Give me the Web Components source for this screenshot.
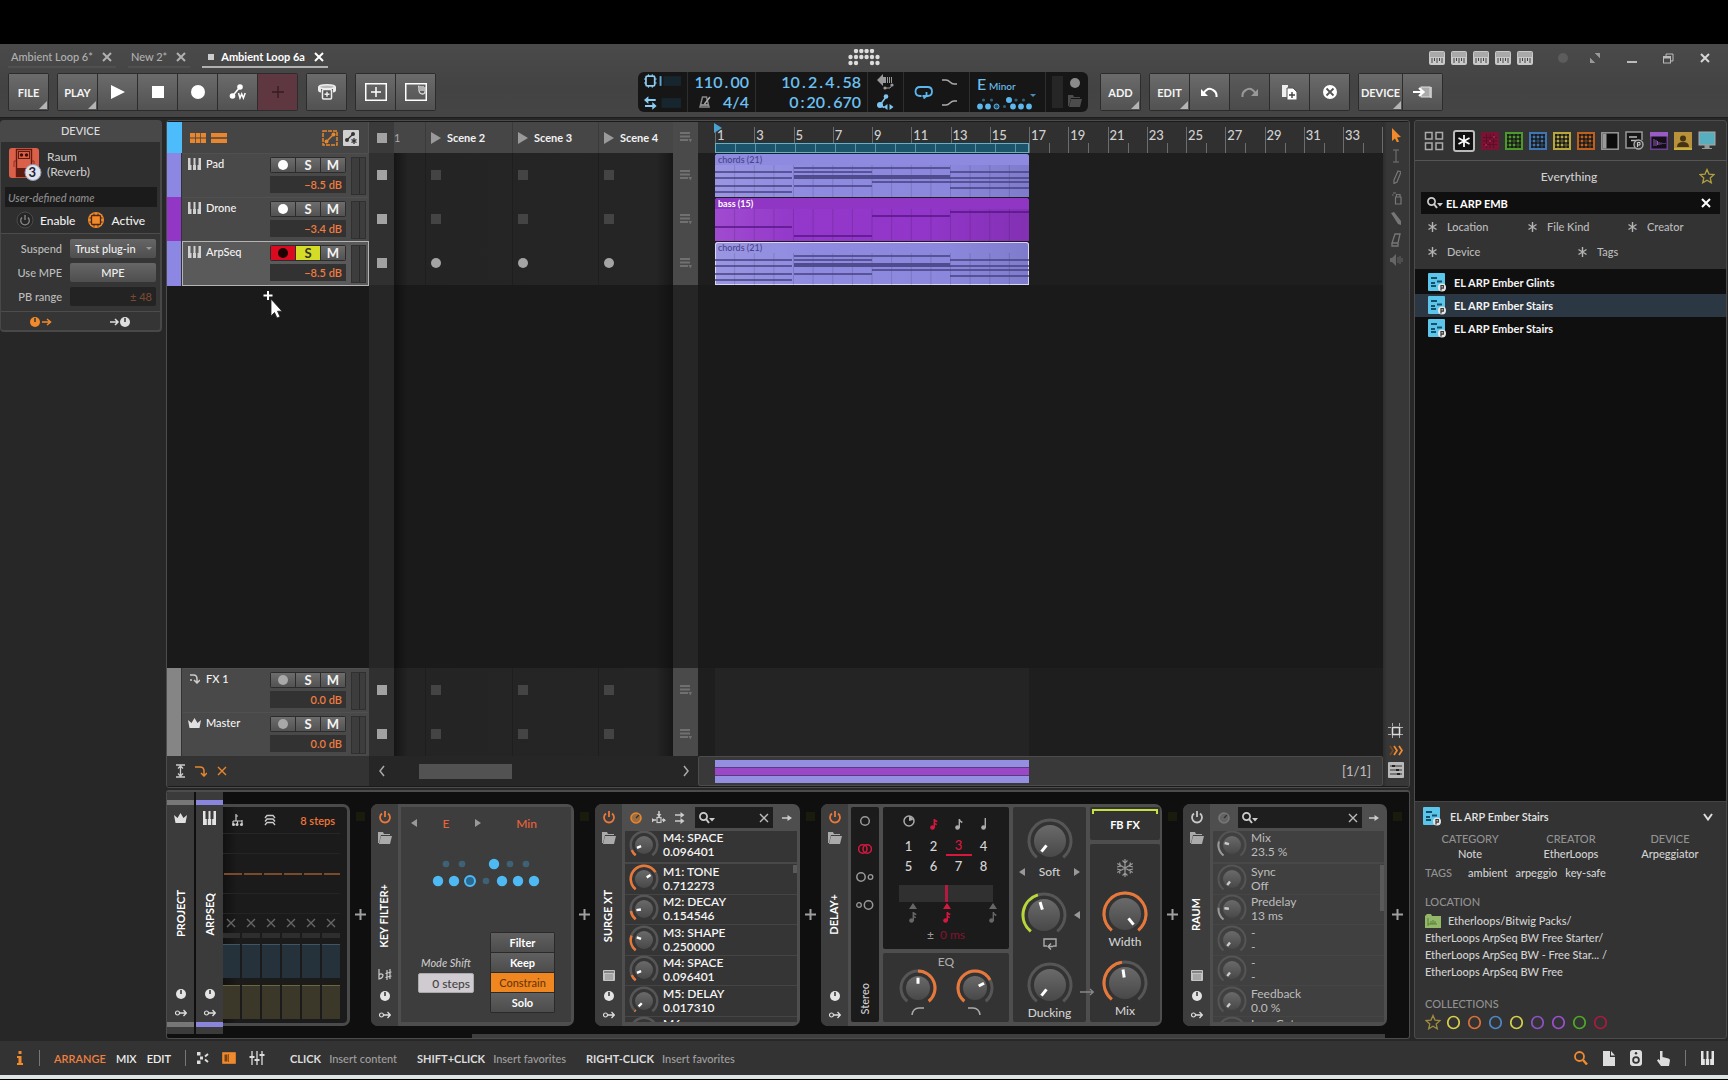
<!DOCTYPE html>
<html lang="en">
<head>
<meta charset="utf-8">
<title>Ambient Loop 6a</title>
<style>
html,body{margin:0;height:100%;background:#000}
body{font-family:Lato,"Liberation Sans",sans-serif;font-size:11px;font-weight:500;line-height:15px;color:#d6d6d6;overflow:hidden}
</style>
</head>
<body>
<daw-app></daw-app>
<script>
/* ---------- icon library: [width, height, markup] ---------- */
const grid = c => `<rect x="1" y="1" width="16" height="16" fill="#1b1b1b" stroke="${c}" stroke-width="2"/>` +
  [5,9,13].map(p=>`<path d="M${p} 2V16M2 ${p}H16" stroke="${c}" stroke-opacity=".55"/>`).join('') +
  [[5,5],[9,5],[13,5],[5,9],[13,9],[5,13],[9,13]].map(([x,y])=>`<rect x="${x-1}" y="${y-1}" width="2" height="2" fill="${c}"/>`).join('');
const ICONS = {
  close:[10,10,'<path d="M1 1L9 9M9 1L1 9" stroke="currentColor" stroke-width="2"/>'],
  closeThin:[10,10,'<path d="M1 1L9 9M9 1L1 9" stroke="currentColor" stroke-width="1.4"/>'],
  logo:[33,17,[[8,2],[13.3,2],[18.600,2],[24,2],[2.500,8],[8,8],[13.300,8],[18.600,8],[24,8],[29.500,8],[2.500,14],[8,14],[24,14],[29.500,14]].map(([x,y])=>`<circle cx="${x}" cy="${y}" r="2.200" fill="#ddd"/>`).join('')],
  midi:[16,14,'<rect width="16" height="14" rx="2" fill="#c9c9c9"/><rect x="1" y="1" width="14" height="5" fill="#a9a9a9"/><path d="M3 7v5M5.500 7v3M8 7v5M10.500 7v3M13 7v5" stroke="#444"/>'],
  dot:[12,12,'<circle cx="6" cy="6" r="5" fill="#5c5c5c"/>'],
  expand:[12,12,'<path d="M6 1h5v5zM6 11H1V6z" fill="#999"/><path d="M1 6l5 5M6 1l5 5" stroke="#999" stroke-width=".6"/>'],
  min:[10,12,'<path d="M0 10h10" stroke="#bbb" stroke-width="2"/>'],
  restore:[11,11,'<path d="M3 3V1h7v7H8" fill="none" stroke="#bbb"/><rect x=".5" y="3.500" width="7" height="6.500" fill="none" stroke="#bbb"/><path d="M.5 4.500h7" stroke="#bbb" stroke-width="2"/>'],
  play:[14,16,'<path d="M0 1L14 8L0 15z" fill="#fff"/>'],
  stop:[12,12,'<rect width="12" height="12" fill="#fff"/>'],
  rec:[14,14,'<circle cx="7" cy="7" r="7" fill="#fff"/>'],
  autow:[18,16,'<circle cx="3.500" cy="12" r="2.800" fill="#fff"/><circle cx="11" cy="3" r="2.800" fill="#fff"/><path d="M3.500 12L11 3" stroke="#fff" stroke-width="1.600"/><path d="M9.500 9l1.500 5 1.700-4 1.700 4 1.800-5" fill="none" stroke="#fff" stroke-width="1.500"/>'],
  plusDark:[12,12,'<path d="M6 0v12M0 6h12" stroke="#3a1a20" stroke-width="1.400"/>'],
  stack:[20,18,'<path d="M1 4q0-3 9-3t9 3v3q0 2-3 2.500V6H4v3.500Q1 9 1 7z" fill="#eee"/><ellipse cx="10" cy="3.800" rx="7" ry="1.300" fill="#bbb"/><rect x="5.500" y="6.500" width="9" height="9.500" rx="1" fill="#555" stroke="#eee" stroke-width="1.500"/><path d="M10 8.700v5M7.500 11.200h5" stroke="#eee" stroke-width="1.400"/>'],
  frameplus:[22,18,'<rect x=".75" y=".75" width="20.500" height="16.500" fill="none" stroke="#fff" stroke-width="1.500"/><path d="M11 4v10M6 9h10" stroke="#fff" stroke-width="1.500"/>'],
  framehand:[22,18,'<rect x=".75" y=".75" width="20.500" height="16.500" fill="none" stroke="#fff" stroke-width="1.500"/><path d="M13 3.500h1v4q.5 3.500 3.500 3.500t2.500-3.500V4M16 8V3M18 8V3" fill="none" stroke="#ddd" stroke-width="1.300"/>'],
  chipbar:[38,14,'<rect x="2" y="2" width="9" height="10" rx="1.500" fill="none" stroke="#8bcdf2" stroke-width="1.800"/><path d="M4.500 0v2M8.500 0v2M4.500 12v2M8.500 12v2M0 5h2M0 9h2M11 5h2M11 9h2" stroke="#8bcdf2"/><rect x="16" y="2" width="2" height="10" fill="#5aa6d2"/><rect x="20" y="2" width="18" height="10" fill="#17262e"/>'],
  swapbar:[38,14,'<path d="M4.500 0v8L0 4zM8.500 6v8l4.500-4z" fill="#8bcdf2"/><path d="M3 4h9M1 10h9" stroke="#8bcdf2" stroke-width="2"/><rect x="18" y="2" width="20" height="10" fill="#17262e"/>'],
  metro:[12,12,'<path d="M3.500 1h4L10 11H1z" fill="none" stroke="#888" stroke-width="1.500"/><path d="M5.500 8L11 1M2 9h7" stroke="#aaa" stroke-width="1.500"/>'],
  mback:[17,16,'<path d="M0 6l6-6v3h3v6H6v3z" fill="#999"/><path d="M10.500 3v6M12.500 3v6M14.500 3v6" stroke="#999"/><circle cx="8" cy="14" r="1.600" fill="#999"/><circle cx="15" cy="11" r="1.600" fill="#999"/><path d="M8 14h5l2-3" stroke="#999" fill="none"/>'],
  autoblue:[17,16,'<circle cx="3" cy="11" r="3" fill="#7cc6f2"/><circle cx="9" cy="2.500" r="2.300" fill="#7cc6f2"/><path d="M3 11l6-8M3 11l4 2.500" stroke="#7cc6f2" stroke-width="1.500"/><path d="M10.500 10v6L6.500 13zM12.500 10v6l4-3z" fill="#7cc6f2"/>'],
  loop:[20,14,'<path d="M7.500 11H6Q1.500 11 1.500 6.500T6 2h7.500Q18 2 18 6.500T13.500 11H12M9.500 13.500L12.500 11V7M12.500 11H8.500" fill="none" stroke="#5cb7ee" stroke-width="1.800"/>'],
  pin:[15,6,'<path d="M0 1h4q2 0 4 2t4 2h3" fill="none" stroke="#aaa" stroke-width="1.500"/>'],
  pout:[15,6,'<path d="M0 5h4q2 0 4-2t4-2h3" fill="none" stroke="#aaa" stroke-width="1.500"/>'],
  keydots:[56,14,[6.500,14.500,39,46.500].map(x=>`<circle cx="${x}" cy="4" r="1.600" fill="#33617d"/>`).join('')+'<circle cx="32" cy="4" r="3" fill="#5cb7ee"/>'+[3,11,36,44,52].map(x=>`<circle cx="${x}" cy="10.500" r="2.900" fill="#5cb7ee"/>`).join('')+'<circle cx="19.500" cy="10.500" r="2.500" fill="#24506b" stroke="#5cb7ee"/><circle cx="27.500" cy="10.500" r="1.500" fill="#33617d"/>'],
  folder:[14,12,'<path d="M0 0h5l1 2h6v1H3L1 11H0z" fill="currentColor"/><path d="M3 4h11l-2 8H1z" fill="currentColor"/>'],
  undo:[17,11,'<path d="M2 7q5-8 10-4 4 2 3.500 7" fill="none" stroke="#fff" stroke-width="2"/><path d="M0 2v7h7z" fill="#fff"/>'],
  redo:[17,11,'<path d="M15 7Q10-1 5 3 1 5 1.500 10" fill="none" stroke="#999" stroke-width="2"/><path d="M17 2v7h-7z" fill="#999"/>'],
  dup:[15,15,'<path d="M0 0h6v12H0z" fill="#eee"/><path d="M5 3h6l4 4v8H5z" fill="#fff" stroke="#555"/><path d="M10 7v6M7 10h6" stroke="#444" stroke-width="1.400"/>'],
  del:[14,14,'<circle cx="7" cy="7" r="7" fill="#fff"/><path d="M3.500 3.500l7 7M10.500 3.500l-7 7" stroke="#555" stroke-width="1.800"/>'],
  into:[19,13,'<rect x="8" y="1" width="9" height="10" fill="#aaa" stroke="#ddd"/><path d="M18 1v11" stroke="#ddd" stroke-width="1.500"/><path d="M0 6h9M6 2l4.500 4L6 10" fill="none" stroke="#fff" stroke-width="2.200"/>'],
  raum:[34,34,'<rect x="1" y="1" width="30" height="30" rx="3" fill="#db6049"/><rect x="8.500" y="2.500" width="15" height="27" fill="none" stroke="#5d1c12" stroke-width="1.400"/><rect x="10.500" y="4.500" width="11" height="7" fill="none" stroke="#5d1c12"/><circle cx="13.500" cy="8" r="1.700" fill="#3c100a"/><circle cx="18.500" cy="8" r="1.700" fill="#3c100a"/><rect x="9" y="21" width="10" height="8" fill="#5d1c12"/><path d="M8 14H6v6M24 14h2v5" stroke="#8d3323" fill="none"/><circle cx="25" cy="25.500" r="8" fill="#dfe3ee" stroke="#99a"/>'],
  power:[14,14,'<path d="M4 3.500a5 5 0 1 0 6 0M7 1v6" fill="none" stroke="currentColor" stroke-width="1.800"/>'],
  powerRing:[18,18,'<circle cx="9" cy="9" r="8" fill="#262626" stroke="#4a4a4a"/><path d="M6 6.500a4.300 4.300 0 1 0 6 0M9 4v5" fill="none" stroke="#888" stroke-width="1.300"/>'],
  active:[18,18,'<circle cx="9" cy="9" r="8" fill="#f08a2c"/><rect x="4.500" y="4.500" width="9" height="9" rx="1" fill="none" stroke="#4a2a0e" stroke-width="1.300"/><path d="M7 2.500v2M11 2.500v2M7 13.500v2M11 13.500v2M2.500 7h2M2.500 11h2M13.500 7h2M13.500 11h2" stroke="#4a2a0e"/>'],
  knobout:[22,12,'<circle cx="5" cy="6" r="5" fill="#f08a2c"/><path d="M5 2v4" stroke="#333" stroke-width="1.500"/><path d="M12 6h8M17 3l3.500 3L17 9" fill="none" stroke="#f08a2c" stroke-width="1.500"/>'],
  knobin:[22,12,'<circle cx="16" cy="6" r="5" fill="#ddd"/><path d="M16 2v4" stroke="#333" stroke-width="1.500"/><path d="M1 6h7M6 3l3 3-3 3" fill="none" stroke="#ddd" stroke-width="1.500"/>'],
  gridv:[16,10,'<path d="M0 0h5v4.500H0zM5.800 0h4.500v4.500H5.800zM11 0h5v4.500h-5zM0 5.500h5V10H0zM5.800 5.500h4.500V10H5.800zM11 5.500h5V10h-5z" fill="#e8862e"/>'],
  rowsv:[16,10,'<path d="M0 0h16v4.300H0zM0 5.700h16V10H0z" fill="#e8862e"/>'],
  autoor:[16,16,'<rect x="1" y="1" width="14" height="14" fill="none" stroke="#e8862e" stroke-width="1.500" stroke-dasharray="4 1"/><path d="M4 12l8-8" stroke="#e8862e" stroke-width="1.500"/><circle cx="4.500" cy="11.500" r="2" fill="#e8862e"/><circle cx="11.500" cy="4.500" r="2" fill="#e8862e"/>'],
  autogr:[16,16,'<rect width="16" height="16" rx="1" fill="#d0d0d0"/><path d="M4 10l6-6M11 8v6M8.500 9.500l5 3M13.500 9.500l-5 3" stroke="#333" stroke-width="1.300"/><circle cx="4" cy="10" r="2" fill="#333"/><circle cx="10" cy="4" r="2" fill="#333"/>'],
  keys:[13,12,'<path d="M0 0h2.500v7h1v5H0zM5 7h.5V0h2v7H8v5H5zM10.500 0H13v12H9.500V7h1z" fill="#d0d0d0"/>'],
  keysBig:[13,14,'<path d="M0 0h2.500v8h1.300v6H0zM4.800 8H5.500V0h2v8h.7v6H4.800zM10.500 0H13v14H9.200V8h1.300z" fill="#e4e4e4"/>'],
  fxarrow:[10,10,'<path d="M0 1h3.500Q7 1 7 5v4M4 6l3 3 3-3M0 6h2" fill="none" stroke="#ccc" stroke-width="1.500"/>'],
  crown:[13,10,'<path d="M0 2l3.500 3L6.500 0l3 5L13 2l-1.500 8h-10z" fill="#e0e0e0"/>'],
  launch:[10,14,'<path d="M0 1l10 6L0 13z" fill="#9a9a9a"/>'],
  menu:[12,11,'<path d="M0 1h10M0 4.500h10M0 8h8" stroke="#707070" stroke-width="2.200"/><path d="M8.500 7h3.500l-1.700 3.500z" fill="#707070"/>'],
  vexp:[9,14,'<path d="M0 1h9M0 13h9M4.500 2v10M2 4.500L4.500 2 7 4.500M2 9.500L4.500 12 7 9.500" fill="none" stroke="#ccc" stroke-width="1.300"/>'],
  fxor:[12,11,'<path d="M0 1h5q4 0 4 4v5M6 7l3 3 3-3" fill="none" stroke="#e8862e" stroke-width="1.500"/>'],
  chevl:[6,12,'<path d="M5 1L1 6l4 5" fill="none" stroke="#aaa" stroke-width="1.500"/>'],
  chevr:[6,12,'<path d="M1 1l4 5-4 5" fill="none" stroke="#aaa" stroke-width="1.500"/>'],
  chevd:[10,8,'<path d="M1 1l4 5.500L9 1" fill="none" stroke="#ddd" stroke-width="2"/>'],
  tArrow:[10,14,'<path d="M1 0l9 9-4 .5 2 4-2 1-2-4L1 13z" fill="#f08a2c"/>'],
  tBeam:[8,14,'<path d="M1 1h6M1 13h6M4 1v12" stroke="#777" fill="none"/>'],
  tPen:[9,14,'<path d="M6 1l3 1-4 10-3 1.500L2 10z" fill="none" stroke="#777" stroke-width="1.200"/>'],
  tSpray:[11,14,'<path d="M4.500 6h5.500v7H4.500zM5.500 6V3.500h3.500V6M5 2H2M2.500 4H1" fill="none" stroke="#777" stroke-width="1.200"/>'],
  tKnife:[12,14,'<path d="M1 1l3-1 7 9v4L8 12z" fill="#777"/>'],
  tErase:[10,14,'<path d="M4 1h5L7 10H1zM1 10v3h6v-3" fill="none" stroke="#777" stroke-width="1.300"/>'],
  tSpk:[13,12,'<path d="M0 4h2l4-4v12L2 8H0z" fill="#666"/><path d="M8 3v6M10 2v8M12 4v4" stroke="#666"/>'],
  hash:[16,16,'<path d="M0 4.500h16M0 11.500h16M4.500 0v16M11.500 0v16" stroke="#aaa" stroke-dasharray="3 1"/><rect x="4.500" y="4.500" width="7" height="7" fill="none" stroke="#ddd" stroke-width="1.500"/>'],
  follow:[15,11,'<path d="M1 1l3 4.500-3 4.500" fill="none" stroke="#7a4a20" stroke-width="1.500"/><path d="M5 1l3 4.500-3 4.500M10 1l3 4.500-3 4.500" fill="none" stroke="#f08a2c" stroke-width="1.700"/>'],
  setbox:[16,16,'<rect width="16" height="16" rx="1" fill="#b9b9b9"/><path d="M2 4h12M2 8h12M2 12h12" stroke="#333"/><path d="M4 3h3v2H4zM8 7h3v2H8zM9 11h3v2H9z" fill="#222"/>'],
  knobdot:[10,10,'<circle cx="5" cy="5" r="5" fill="#e4e4e4"/><path d="M5 1v4" stroke="#333" stroke-width="1.500"/>'],
  route:[12,8,'<circle cx="2.500" cy="4" r="2" fill="none" stroke="#ddd" stroke-width="1.200"/><path d="M4.500 4H11M8.500 1L11.300 4 8.500 7" fill="none" stroke="#ddd" stroke-width="1.300"/>'],
  flatsharp:[14,12,'<path d="M1 0v10q4-1 4-4-2-2-4 0" fill="none" stroke="#ccc" stroke-width="1.200"/><path d="M9 1v10M12 0v10M7.500 4.500l6-1.500M7.500 8.500l6-1.500" stroke="#ccc" stroke-width="1.200"/>'],
  win:[12,11,'<rect width="12" height="11" rx="1" fill="#c4c4c4"/><path d="M1 2h10" stroke="#444"/><path d="M2 5h8M2 7h8M2 9h8" stroke="#888"/>'],
  chord:[11,12,'<path d="M4 0v7M4 2h2M1 7h9M1 7v3M5.500 7v3M10 6v4" fill="none" stroke="#ccc" stroke-width="1.200"/><circle cx="1.500" cy="10.500" r="1.500" fill="#ccc"/><circle cx="5" cy="10.500" r="1.500" fill="#ccc"/><circle cx="9.500" cy="10.500" r="1.500" fill="#ccc"/>'],
  layers:[12,12,'<path d="M1 4l2-2.500h6L11 4M1 7.500L3 5h6l2 2.500M1 11l2-2.500h6l2 2.500" fill="none" stroke="#ccc" stroke-width="1.300"/>'],
  tril:[6,8,'<path d="M6 0v8L0 4z" fill="#999"/>'],
  trir:[6,8,'<path d="M0 0v8l6-4z" fill="#999"/>'],
  scale:[112,32,[[16,7],[32,7],[80,7],[96,7],[56,24]].map(([x,y])=>`<circle cx="${x}" cy="${y}" r="3.300" fill="#3f6175"/>`).join('')+'<circle cx="64" cy="7" r="5.200" fill="#4fb9f3"/>'+[8,24,72,88,104].map(x=>`<circle cx="${x}" cy="24" r="5.200" fill="#4fb9f3"/>`).join('')+'<circle cx="40" cy="24" r="5" fill="#286992" stroke="#4fb9f3" stroke-width="2"/>'],
  modk:[12,12,'<circle cx="6" cy="6" r="5" fill="currentColor" fill-opacity=".55" stroke="currentColor" stroke-width="1.600"/><path d="M6 6l3-3" stroke="#333" stroke-width="1.400"/>'],
  tree:[14,13,'<path d="M7 0v6" stroke="#ccc" stroke-width="1.500"/><path d="M4.500 3h5L7 6z" fill="#ccc"/><rect x="5" y="6.500" width="4" height="5" fill="none" stroke="#ccc" stroke-width="1.200"/><path d="M1 9h3M13 9h-3" stroke="#ccc" stroke-width="1.500"/><path d="M0 11.500V7l2.500 2.200zM14 9.200L11 7v4.500z" fill="#ccc"/>'],
  twoarr:[10,12,'<path d="M0 3h7M0 9h7" fill="none" stroke="#ccc" stroke-width="1.500"/><path d="M5.500 0L9.500 3 5.500 6zM5.500 6l4 3-4 3z" fill="#ccc"/>'],
  arr:[10,8,'<path d="M0 4h7" stroke="#ccc" stroke-width="1.500"/><path d="M5.500 1L10 4 5.500 7z" fill="#ccc"/>'],
  search:[16,12,'<circle cx="4.500" cy="4.500" r="3.600" fill="none" stroke="#ccc" stroke-width="1.700"/><path d="M7 7l3 4" stroke="#ccc" stroke-width="2"/><path d="M10 6h6l-3 3.500z" fill="#ccc"/>'],
  ring1:[12,12,'<circle cx="6" cy="6" r="4.300" fill="none" stroke="#999" stroke-width="1.500"/>'],
  ring2:[14,12,'<circle cx="4.800" cy="6" r="4.200" fill="none" stroke="#d8173f" stroke-width="1.500"/><circle cx="9.200" cy="6" r="4.200" fill="none" stroke="#d8173f" stroke-width="1.500"/>'],
  ring3:[18,12,'<circle cx="5" cy="6" r="4.200" fill="none" stroke="#999" stroke-width="1.500"/><circle cx="14.500" cy="6" r="2.300" fill="none" stroke="#999" stroke-width="1.300"/>'],
  ring4:[18,12,'<circle cx="3" cy="6" r="2.300" fill="none" stroke="#999" stroke-width="1.300"/><circle cx="12.500" cy="6" r="4.200" fill="none" stroke="#999" stroke-width="1.500"/>'],
  clock:[12,12,'<circle cx="6" cy="6" r="5" fill="none" stroke="#aaa" stroke-width="1.500"/><path d="M6 6V1.500A4.500 4.500 0 0 1 10 5z" fill="#aaa"/>'],
  n16:[8,12,'<circle cx="2.500" cy="9.500" r="2.300" fill="currentColor"/><path d="M4.300 10V1q0 2 3 2.500M4.300 4q0 2 2.500 2.500" fill="none" stroke="currentColor" stroke-width="1.500"/>'],
  n8:[8,12,'<circle cx="2.500" cy="9.500" r="2.300" fill="currentColor"/><path d="M4.300 10V1q0 2 3 3.500" fill="none" stroke="currentColor" stroke-width="1.400"/>'],
  n4:[6,12,'<circle cx="2.500" cy="9.500" r="2.300" fill="currentColor"/><path d="M4.300 10V0" stroke="currentColor" stroke-width="1.400"/>'],
  fb:[14,12,'<path d="M4 8H1V1h12v7h-3M5 8.500h5M8 5.500L5 8.500l3 3" fill="none" stroke="#aaa" stroke-width="1.400"/>'],
  snow:[18,18,'<path d="M9 0v18M1.200 4.500l15.600 9M1.200 13.500l15.600-9M6.500 1.500L9 4l2.500-2.500M6.500 16.500L9 14l2.500 2.500M1 8l3.500-1L3.500 3.500M17 10l-3.500 1 1 3.500M1 10l3.500 1-1 3.500M17 8l-3.500-1 1-3.500" fill="none" stroke="#999" stroke-width="1.200"/>'],
  hp:[14,8,'<path d="M1 8Q2 1 8 1h5" fill="none" stroke="#aaa" stroke-width="1.500"/>'],
  lp:[14,8,'<path d="M0 1h5q6 0 7 7" fill="none" stroke="#aaa" stroke-width="1.500"/>'],
  arrLong:[14,8,'<path d="M0 4h13M10 1l3.300 3L10 7" fill="none" stroke="#888" stroke-width="1.300"/>'],
  squares:[20,20,'<path d="M1.500 1.500h6.500v6.500H1.500zM12 1.500h6.500v6.500H12zM1.500 12h6.500v6.500H1.500zM12 12h6.500v6.500H12z" fill="#2a2a2a" stroke="#aaa" stroke-width="1.500"/>'],
  everything:[22,22,'<rect x="1" y="1" width="20" height="20" rx="2" fill="#111" stroke="#bbb" stroke-width="2"/><path d="M11 5v12M5.500 8l11 6M5.500 14l11-6" stroke="#fff" stroke-width="1.700"/>'],
  gRed:[18,18,'<rect width="18" height="18" fill="#7a1233"/><path d="M5.500 2v14M9 2v14M12.500 2v14M2 5.500h14M2 9h14M2 12.500h14" stroke="#5b0e28"/><path d="M4 12h2v2H4zM8 8h2v2H8zM12 4h2v2h-2z" fill="#a02048"/>'],
  gGreen:[18,18,grid('#4c9a2a')],gBlue:[18,18,grid('#3f77b5')],gYellow:[18,18,grid('#b8a73a')],gOrange:[18,18,grid('#c0601f')],
  bkPanel:[18,18,'<rect x=".8" y=".8" width="16.400" height="16.400" fill="#0c0c0c" stroke="#999" stroke-width="1.500"/><rect x="1.500" y="1.500" width="4" height="15" fill="#999"/>'],
  bkList:[19,19,'<path d="M10 17H1V1h16v8" fill="#161616" stroke="#999" stroke-width="1.500"/><path d="M4 6h8M6 9.500h6" stroke="#bbb" stroke-width="1.500"/><circle cx="13.500" cy="13.500" r="4.500" fill="#333" stroke="#aaa" stroke-width="1.400"/><path d="M12.500 16v-4.500h2.500v2.500h-2.500" fill="none" stroke="#ccc"/>'],
  bkWave:[18,18,'<rect x=".75" y=".75" width="16.500" height="16.500" fill="#151018" stroke="#6d4191" stroke-width="1.500"/><path d="M0 0h18v4.500H0z" fill="#9a5cc4"/><path d="M4 7v7M6 8v6M7.500 9v4M9 10v3M11 10.500v2M13 11v1M15 11v1" stroke="#8a5ab0"/>'],
  bkUser:[18,18,'<rect width="18" height="18" fill="#b8923a"/><circle cx="9" cy="6.500" r="3" fill="#453413"/><path d="M3 15q0-5 6-5t6 5z" fill="#453413"/><path d="M0 16h18v2H0z" fill="#c8b03a"/>'],
  bkMon:[18,19,'<rect x="1" y="1" width="16" height="13" fill="#57aebf" stroke="#aaa"/><path d="M7 14h4v3H7zM4 17.500h10" stroke="#999" fill="#999"/>'],
  star:[16,16,'<path d="M8 1.500l2 4.600 5 .5-3.800 3.300 1.100 4.900L8 12.200l-4.300 2.600 1.100-4.900L1 6.600l5-.5z" fill="none" stroke="currentColor" stroke-width="1.300"/>'],
  preset:[19,19,'<rect width="17" height="18" rx="1" fill="#5cc6ea"/><path d="M3 5h6M3 10h4M9 8.500h5M3 13h5" stroke="#14506a" stroke-width="2"/><circle cx="14" cy="14.500" r="4" fill="#e4e4e4"/><path d="M13 17.500v-5h2.300v2.600h-2.300" fill="none" stroke="#333" stroke-width="1.200"/>'],
  gfolder:[16,15,'<path d="M0 3l2-2h4l1 2h9v12H0z" fill="#94b86a"/><path d="M3 5v8M3 11h9M6 8v3M8 7v4M10 8v3" stroke="#5a7c38"/>'],
  circ:[13,15,'<ellipse cx="6.500" cy="7.500" rx="5.700" ry="6" fill="none" stroke="currentColor" stroke-width="1.700"/>'],
  info:[6,14,'<path d="M1.500 0h3v3h-3zM0 5h4.500v7H6v2H0v-2h1.500V7H0z" fill="#f08a2c"/>'],
  nodes:[12,12,'<rect y="0" width="3.500" height="3.500" fill="#ddd"/><rect y="8.500" width="3.500" height="3.500" fill="#ddd"/><rect x="3" y="4.500" width="3" height="3" fill="#ddd"/><path d="M11 2L8 4.500M8 7.500L11 10" stroke="#ddd" stroke-width="2"/>'],
  panelor:[14,12,'<rect x="1" y="1" width="12" height="10" fill="#f08a2c" stroke="#f08a2c" stroke-width="1.600"/><path d="M2.500 2.500h3v7h-3z" fill="#7a4214"/><path d="M6.500 2v8" stroke="#7a4214" stroke-width=".8"/>'],
  faders:[16,14,'<path d="M3 0v14M8 0v14M13 0v14" stroke="#ddd" stroke-width="1.300"/><path d="M.5 6h5M5.500 9h5M10.500 4h5" stroke="#ddd" stroke-width="2"/>'],
  mag:[14,14,'<circle cx="5.500" cy="5.500" r="4.500" fill="none" stroke="#f08a2c" stroke-width="1.800"/><path d="M9 9l4 4.500" stroke="#f08a2c" stroke-width="2.400"/>'],
  page:[12,15,'<path d="M0 0h7v6h5v9H0zM8 0l4 4.500H8z" fill="#ddd"/>'],
  speaker:[12,16,'<rect width="12" height="16" rx="3" fill="#ddd"/><circle cx="6" cy="3.200" r="1.200" fill="#333"/><circle cx="6" cy="10" r="3.800" fill="#333"/><circle cx="6" cy="10" r="2" fill="#ddd"/>'],
  hand:[13,15,'<path d="M3 0h2.500v6l6 1.500q2 .5 1.300 3L12 15H4L0 9.500 1.500 8 3 9.500z" fill="#ddd"/>'],
  cursor:[20,30,'<path d="M5 1v9M.5 5.500h9" stroke="#fff" stroke-width="2"/><path d="M8 9v17l3.500-3.500 2.500 5.500 3-1.300-2.500-5.500H19z" fill="#fff" stroke="#222" stroke-width=".8"/>']
};
const ic = n => `<bw-icon name="${n}"></bw-icon>`;

/* ---------- base class ---------- */
class Base extends HTMLElement{
  connectedCallback(){
    if(this.shadowRoot) return;
    const t=document.createElement('template');
    t.innerHTML=`<style>
:host{display:block;box-sizing:border-box}
*,*::before,*::after{box-sizing:border-box}
button,input,select{font:inherit;color:inherit;background:none;border:0;margin:0;padding:0;border-radius:0;outline:0;min-width:0;appearance:none}
button{display:flex;align-items:center;justify-content:center}
a{color:inherit;text-decoration:none}
.r{display:flex;align-items:center}.c{display:flex;flex-direction:column}.f{flex:1;min-width:0}
${this.css()}</style>${this.html()}`;
    this.attachShadow({mode:'open'}).append(t.content.cloneNode(true));
  }
  css(){return ''} html(){return '<slot></slot>'}
  a(n,d=''){return this.getAttribute(n)??d}
}
const def=(n,c)=>customElements.define(n,c);

class BwIcon extends Base{
  css(){return ':host{display:inline-flex;flex:none}svg{display:block}'}
  html(){const [w,h,m]=ICONS[this.a('name')];return `<svg width="${w}" height="${h}" viewBox="0 0 ${w} ${h}" aria-hidden="true">${m}</svg>`}
}

/* rotary control: size, value and arc start/end as 0..1 of the sweep */
class BwKnob extends Base{
  css(){return ':host{display:inline-flex;flex:none}svg{display:block}'}
  html(){
    const s=+this.a('size',44),w=+this.a('stroke',3),body=+this.a('body',16),v=+this.a('value',0),
      from=+this.a('from',0),to=+this.a('to',v),col=this.a('color','#e8783a'),c=s/2,r=c-w/2-.5;
    const p=(t,rad)=>{const a=(-141+282*t)*Math.PI/180;return [(c+rad*Math.sin(a)).toFixed(2),(c-rad*Math.cos(a)).toFixed(2)]};
    const arc=(x,y)=>`M${p(x,r)}A${r} ${r} 0 ${(y-x)*282>180?1:0} 1 ${p(y,r)}`;
    return `<svg width="${s}" height="${s}" viewBox="0 0 ${s} ${s}" role="img" aria-label="knob"><defs><linearGradient id="g" x2="0" y2="1"><stop stop-color="#6a6a6a"/><stop offset="1" stop-color="#484848"/></linearGradient></defs>
<path d="${arc(0,1)}" fill="none" stroke="${this.a('track','#565656')}" stroke-width="${w}"/>
${to>from?`<path d="${arc(from,to)}" fill="none" stroke="${col}" stroke-width="${w}"/>`:''}
<circle cx="${c}" cy="${c}" r="${body}" fill="url(#g)"/><path d="M${p(v,body*.35)}L${p(v,body*.85)}" stroke="${this.a('pointer','#fff')}" stroke-width="${body>10?3:2.4}"/></svg>`}
}

/* ---------- header ---------- */
class ProjectTab extends Base{
  css(){return `:host{display:flex;align-items:center;height:24px;padding:3px 4px 0 3px;border-bottom:2px solid #505050;color:#b0b0b0;gap:9px}
:host([active]){color:#fff;border-color:#b0b0b0;font-weight:700}
i{width:6px;height:6px;background:#ccc;margin-left:3px;margin-right:-2px}`}
  html(){return `${this.hasAttribute('active')?'<i></i>':''}<slot></slot><button aria-label="Close">${ic('close')}</button>`}
}
class ToolGroup extends Base{
  css(){return `:host{display:flex;height:38px;border:1px solid #2c2c2c;border-radius:2px;background:#2c2c2c;gap:1px}`}
}
class ToolButton extends Base{
  css(){return `:host{display:flex}
button{width:39px;height:36px;background:linear-gradient(#6b6b6b,#525252);color:#f4f4f4;font-weight:700;position:relative}
:host([wide]) button{width:43px}
:host([dim]) button{background:linear-gradient(#5a5a5a,#4b4b4b)}
:host([armed]) button{background:#5e3740}
:host([menu]) button::after{content:"";position:absolute;right:1px;bottom:1px;border:4px solid #b4b4b4;border-top-color:transparent;border-left-color:transparent}`}
  html(){return `<button aria-label="${this.a('label')}"><slot></slot></button>`}
}
class TransportDisplay extends Base{
  css(){return `:host{display:flex;height:40px;background:#161616;border-radius:6px;color:#6cc0f2;overflow:hidden}
.s{border-right:1px solid #2e2e2e;height:40px}
.n{font-size:16px;line-height:20px;font-weight:600;text-align:right;justify-content:center;align-items:flex-end;padding-right:6px}
.n i{font-style:normal;display:inline-block;width:8px;text-align:center}
.k{position:relative;padding:3px 7px;gap:2px;color:#6cc0f2;align-items:flex-start}.k b{font-size:16px;font-weight:500;line-height:18px}.k small{font-size:10px}
.k::after{content:"";position:absolute;right:9px;top:22px;border:3px solid transparent;border-top-color:#4a8cb4}`}
  html(){return `<div class="s c" style="width:50px;gap:8px;padding:2px 6px">${ic('chipbar')}${ic('swapbar')}</div>
<div class="s c n" style="width:68px"><span>110<i>.</i>00</span><span class="r" style="gap:12px">${ic('metro')}<span>4/4</span></span></div>
<div class="s c n" style="width:112px"><span>10<i>.</i>2<i>.</i>4<i>.</i>58</span><span>0<i>:</i>20<i>.</i>670</span></div>
<div class="s c" style="width:36px;align-items:center;justify-content:center;gap:4px">${ic('mback')}${ic('autoblue')}</div>
<div class="s r" style="width:66px;justify-content:space-between;padding:0 12px 0 10px">${ic('loop')}<div class="c" style="gap:15px">${ic('pin')}${ic('pout')}</div></div>
<button class="s c k" style="width:76px"><span><b>E</b> <small>Minor</small></span>${ic('keydots')}</button>
<div class="r" style="width:42px;padding:0 6px;gap:5px"><span style="width:11px;height:32px;background:#262626"></span><div class="c" style="gap:7px;color:#4c4c4c;align-items:center"><span style="width:10px;height:10px;border-radius:5px;background:#8a8a8a"></span>${ic('folder')}</div></div>`}
}
class AppHeader extends Base{
  css(){return `:host{background:linear-gradient(#4a4a4a,#434343 60%,#454545);height:74px;border-bottom:1px solid #1e1e1e}
.top,.bar{display:grid;grid-template-columns:1fr auto 1fr}
.top{height:28px;align-items:start}.tabs{gap:12px;padding-left:8px}
.win{justify-content:flex-end;padding:6px 18px 0 0;gap:6px;height:22px}
.bar{grid-template-columns:1fr 450px 1fr;align-items:center;padding-right:2px}
.l{gap:8px;padding-left:8px}.rr{gap:8px;padding-left:12px}`}
  html(){return `<div class="top"><div class="r tabs"><project-tab>Ambient Loop 6*</project-tab><project-tab>New 2*</project-tab><project-tab active>Ambient Loop 6a</project-tab></div>
<div style="padding-top:5px">${ic('logo')}</div>
<div class="r win">${ic('midi').repeat(5)}<span class="r" style="margin:0 14px 0 18px">${ic('dot')}</span><div class="r" style="gap:26px">${['expand','min','restore','close'].map(ic).join('')}</div></div></div>
<div class="bar"><div class="r l"><tool-group><tool-button menu>FILE</tool-button></tool-group>
<tool-group><tool-button menu>PLAY</tool-button><tool-button label="Play">${ic('play')}</tool-button><tool-button label="Stop">${ic('stop')}</tool-button><tool-button label="Record">${ic('rec')}</tool-button><tool-button label="Automation write">${ic('autow')}</tool-button><tool-button armed label="Overdub">${ic('plusDark')}</tool-button></tool-group>
<tool-group><tool-button label="Launcher">${ic('stack')}</tool-button></tool-group>
<tool-group><tool-button label="Add panel">${ic('frameplus')}</tool-button><tool-button label="Touch">${ic('framehand')}</tool-button></tool-group></div>
<transport-display></transport-display>
<div class="r rr"><tool-group><tool-button menu>ADD</tool-button></tool-group>
<tool-group><tool-button menu>EDIT</tool-button><tool-button label="Undo">${ic('undo')}</tool-button><tool-button dim label="Redo">${ic('redo')}</tool-button><tool-button label="Duplicate">${ic('dup')}</tool-button><tool-button label="Delete">${ic('del')}</tool-button></tool-group>
<tool-group><tool-button wide menu>DEVICE</tool-button><tool-button label="Insert">${ic('into')}</tool-button></tool-group></div></div>`}
}

/* ---------- inspector ---------- */
class InspectorPanel extends Base{
  css(){return `:host{align-self:start;border:2px solid #484848;border-left-width:1px;border-radius:4px;background:#353535;height:212px}
h2{margin:0;font-size:11px;font-weight:500;color:#ddd;text-align:center;height:20px;line-height:17px;background:#484848}
.box{background:#2f2f2f}
.id{padding:5px 7px 6px;gap:5px;line-height:15px;font-size:12px;font-weight:400;color:#d0d0d0}.ico{position:relative;display:flex}.ico b{position:absolute;right:6px;bottom:1px;color:#223;font-size:13px}
.nm{display:block;width:152px;height:20px;background:#1b1b1b;margin:0 4px;padding:0 3px;font-style:italic}
.nm::placeholder{color:#8d8d8d;opacity:1}
.tog{height:26px;padding-left:15px;gap:6px;color:#f0f0f0;font-size:12px}.tog button{gap:6px}
.tog button+button{margin-left:6px}
.row{display:grid;grid-template-columns:61px 86px;column-gap:8px;height:24px;align-items:center;text-align:right;color:#bdbdbd}
.row>:last-child{height:19px;border-radius:2px;background:linear-gradient(#666,#4e4e4e);color:#f0f0f0}
.row select{padding-left:5px}.row .pb{background:#232323!important;color:#7a4a30!important;text-align:right;padding-right:4px}
.rows{border-top:1px solid #4c4c4c;padding:2px 0 3px}
.sel{position:relative}.sel select{width:100%;height:100%}.sel::after{content:"";position:absolute;right:4px;top:8px;border:3px solid transparent;border-top-color:#999}
.bt{border-top:1px solid #4c4c4c;height:21px;justify-content:space-around;padding:0}`}
  html(){return `<h2>DEVICE</h2><div class="box"><div class="r id"><span class="ico">${ic('raum')}<b>3</b></span><div>Raum<br>(Reverb)</div></div>
<input class="nm" aria-label="User-defined name" placeholder="User-defined name">
<div class="r tog"><button>${ic('powerRing')}Enable</button><button>${ic('active')}Active</button></div></div>
<div class="rows"><div class="row"><label for="s">Suspend</label><span class="sel"><select id="s"><option>Trust plug-in</option></select></span></div>
<div class="row"><span>Use MPE</span><button>MPE</button></div>
<div class="row"><label for="pb">PB range</label><input class="pb" id="pb" value="± 48"></div></div>
<div class="r bt">${ic('knobout')}${ic('knobin')}</div>`}
}

/* ---------- arranger ---------- */
const COLS='15px 187px 25px 279px 25px minmax(0,1fr)';
class ClipBlock extends Base{
  css(){const b=this.a('kind')==='bass';return `:host{width:314px;height:43px;margin-left:17px;margin-top:1px;border-radius:3px 3px 0 0;overflow:hidden;background:${b?'linear-gradient(90deg,#a04bd0,#9338ca 25%,#9136c8 70%,#8330b4)':'linear-gradient(90deg,#9a96e2,#8f8be0 30%,#8b87dc 75%,#7f7bcc)'};color:${b?'#fff':'#484488'};font-size:9px}
:host([selected]){box-shadow:inset 0 0 0 1px #d8d6f4}
div{height:11px;line-height:12px;padding-left:3px;font-weight:${b?700:500};background:${b?'#8f36c4':'#8e8adf'}}:host([selected]) div{background:none}svg{display:block}`}
  html(){const b=this.a('kind')==='bass';
    const n=b?[[0,77,30],[79,157,39],[157,235,19],[235,314,15]]:[[0,77,19],[0,77,25],[0,77,33],[0,77,39],[79,157,15],[79,157,19],[79,157,33],[157,235,15],[157,235,29],[235,314,19],[235,314,25],[235,314,29],[235,314,35]];
    return `<div>${this.a('name')}</div><svg width="314" height="32" viewBox="0 12 314 32"><path d="${[...Array(15)].map((_,i)=>`M${((i+1)*19.625).toFixed(1)} 11V44`).join('')}" stroke="#000" stroke-opacity=".13"/><path d="${n.map(([x,y,z])=>`M${x} ${z}H${y}`).join('')}" stroke="${b?'#571587':'#46427f'}" stroke-width="1.500"/>${b?'':'<path d="M79 24H235" stroke="#4f4b8d" stroke-width="4"/>'}</svg>`}
}
class TrackRow extends Base{
  css(){const sel=this.hasAttribute('selected');return `:host{display:grid;grid-template-columns:${COLS};height:44px}
.rail{background:var(--rail);border-right:1px solid #333}
.h{background:${sel?'#5a5a5a':'#494949'};border-bottom:1px solid ${sel?'#b4b4b4':'#333'};${sel?'border:1px solid #b4b4b4;':'border-top:1px solid #505050;border-left:1px solid #494949;border-right:1px solid #494949;'}padding:3px 2px 2px 5px;color:#f4f4f4;gap:5px;align-items:flex-start}
.ti{width:13px;height:14px;justify-content:center}.nm{line-height:14px}
.ctl{width:76px;gap:3px}.sm{gap:1px;background:#2c2c2c;padding:1px;border-radius:2px}.sm button{flex:1;height:14px;background:linear-gradient(#6d6d6d,#525252);font-size:13px;line-height:14px;font-weight:700;color:#f4f4f4}
.dot{width:10px;height:10px;border-radius:5px;background:${this.hasAttribute('fx')?'#a8a8a8':'#fff'}}
.sm button.rec{background:#dc0a1e}.rec .dot{background:#1c0404}.sm button.solo{background:#d4dc26;color:#333}
output{display:block;height:17px;line-height:17px;background:#323232;color:#f07c40;text-align:right;padding-right:4px;font-weight:600}
.m{width:15px;height:38px;background:linear-gradient(90deg,#3d3d3d 7px,#2a2a2a 7px 8px,#3d3d3d 8px);border:1px solid #303030;margin-left:auto}
.st{background:#303030;justify-content:center;border-bottom:1px solid #292929}.st i{width:10px;height:10px;background:#a2a2a2}
.sc{display:grid;grid-template-columns:31px 87px 86px 75px;background:linear-gradient(90deg,#151515,#242424 14px,#252525 262px,#171717);border-bottom:1px solid #1f1f1f}
.sc span{display:flex;align-items:center;padding-left:5px;border-left:1px solid #1e1e1e}.sc span:first-child{border:0;padding:0}
.sc i{width:10px;height:10px;background:#444}.sc i.o{border-radius:5px;background:#a4a4a4}
.mn{background:#4a4a4a;border-bottom:1px solid #3c3c3c;justify-content:center}
.tl{background:#1e1e1e;border-bottom:1px solid #1a1a1a;overflow:hidden}
.gh{width:314px;height:44px;margin-left:17px;background:#242424}`}
  html(){const sel=this.hasAttribute('selected'),fx=this.hasAttribute('fx'),dot=`<i class="${sel?'o':''}"></i>`;
    return `<div class="rail"></div><div class="r h"><span class="r ti">${ic(this.a('icon'))}</span><span class="f nm">${this.a('name')}</span>
<div class="c ctl"><div class="r sm"><button class="${sel?'rec':''}" aria-label="Record arm"><span class="dot"></span></button><button class="${sel?'solo':''}">S</button><button>M</button></div><output>${this.a('db')}</output></div><div class="m"></div></div>
<div class="r st"><i></i></div><div class="sc"><span></span><span>${dot}</span><span>${dot}</span><span>${dot}</span></div><div class="r mn">${ic('menu')}</div>
<div class="tl">${fx?'<div class="gh"></div>':'<slot></slot>'}</div>`}
}
class TimeRuler extends Base{
  css(){return `:host{display:flex;background:#303030;overflow:hidden;padding-left:17px;position:relative}
.seg{width:314px;flex:none;display:flex}.seg div{flex:1;border-left:1px solid #6c6c6c;margin-top:5px;height:26px;position:relative;background:linear-gradient(#6c6c6c,#6c6c6c) 19px 16px/1px 10px no-repeat;padding-left:1px;font-size:13px;line-height:17px;color:#d0d0d0}
.loop{position:absolute;left:17px;top:21px;width:314px;height:10px;border:1px solid #5fb3cf;background:repeating-linear-gradient(90deg,transparent 0 19px,#5794a8 19px 20px),#1b546b}
.ph{position:absolute;left:16px;top:1px;border:5px solid transparent;border-left:8px solid #4aa0d0;border-right:0}`}
  html(){const s=(a,n)=>`<div class="seg">${[...Array(8)].map((_,i)=>`<div>${i<n?a+i*2:''}</div>`).join('')}</div>`;return s(1,8)+s(17,8)+s(33,1)+'<span class="loop"></span><span class="ph"></span>'}
}
class ArrangerPanel extends Base{
  css(){return `:host{display:flex;border:1px solid #4c4c4c;padding:1px 0;background:#1a1a1a;border-radius:3px}
.hd,.gap,.ft{display:grid;grid-template-columns:${COLS}}
.hd{height:31px}.hl{background:#454545;padding:0 9px 0 8px;gap:5px;border-right:1px solid #505050}.hs{background:#464646;display:grid;grid-template-columns:31px 87px 86px 75px;color:#f2f2f2;font-weight:700}
.hs span{gap:6px;padding-left:5px;border-left:1px solid #3a3a3a}.hs span:first-child{border:0;padding:0;font-weight:400;color:#aaa}
.sq{width:10px;height:10px;background:#a2a2a2}
.gap{flex:1;min-height:0}.gap>:nth-child(3),.gap>:nth-child(5){background:#262626}.gap>:nth-child(4){background:linear-gradient(90deg,#101010,#1a1a1a 14px,#1a1a1a 262px,#121212)}
.ft{height:30px;grid-template-columns:202px 25px 279px 25px minmax(0,1fr);background:#262626}
.fl{background:#333;padding-left:9px;gap:10px;color:#e8862e}.thumb{width:93px;height:15px;background:#525252;margin-left:25px}
.ov{background:#393939;border:1px solid #4c4c4c;border-radius:2px;padding:0 11px 0 16px;justify-content:space-between;color:#bbb;font-size:13px}
.bars{width:314px;gap:1px;background:#5a3a86}.bars i{height:7px;background:#958fe2}.bars i:nth-child(2){background:#9a48c6}
.tools{width:26px;background:linear-gradient(90deg,#2d2d2d,#373737 4px);align-items:center;padding:6px 0 8px;gap:7px}`}
  html(){return `<div class="c f"><div class="hd"><div style="background:#4dbcfa"></div><div class="r hl">${ic('gridv')}${ic('rowsv')}<span class="f"></span>${ic('autoor')}${ic('autogr')}</div><div class="r" style="background:#3a3a3a;justify-content:center"><span class="sq"></span></div>
<div class="hs"><span class="r">1</span><span class="r">${ic('launch')}Scene 2</span><span class="r">${ic('launch')}Scene 3</span><span class="r">${ic('launch')}Scene 4</span></div><div class="r" style="background:#4a4a4a;justify-content:center">${ic('menu')}</div><time-ruler></time-ruler></div>
<track-row name="Pad" icon="keys" db="−8.5 dB" style="--rail:#8c87e2"><clip-block name="chords (21)"></clip-block></track-row>
<track-row name="Drone" icon="keys" db="−3.4 dB" style="--rail:#9236c6"><clip-block kind="bass" name="bass (15)"></clip-block></track-row>
<track-row selected name="ArpSeq" icon="keys" db="−8.5 dB" style="--rail:#8c87e2"><clip-block selected name="chords (21)"></clip-block></track-row>
<div class="gap"><div></div><div></div><div></div><div></div><div></div><div></div></div>
<track-row fx name="FX 1" icon="fxarrow" db="0.0 dB" style="--rail:#858585"></track-row><track-row fx name="Master" icon="crown" db="0.0 dB" style="--rail:#858585"></track-row>
<div class="ft"><div class="r fl">${ic('vexp')}${ic('fxor')}${ic('closeThin')}</div><div class="r" style="justify-content:center">${ic('chevl')}</div><div class="r"><span class="thumb"></span></div><div class="r" style="justify-content:center">${ic('chevr')}</div>
<div class="r ov"><div class="c bars"><i></i><i></i><i></i></div>[1/1]</div></div></div>
<div class="c tools">${['tArrow','tBeam','tPen','tSpray','tKnife','tErase','tSpk'].map(ic).join('')}<span class="f"></span><span class="c" style="gap:6px;align-items:center">${['hash','follow','setbox'].map(ic).join('')}</span></div>`}
}

/* ---------- device chain ---------- */
class TrackStrip extends Base{
  css(){return `:host{display:flex;flex-direction:column;align-items:center;width:27px;background:#3b3b3b;padding:8px 0 7px}
hr{width:100%;height:5px;border:0;margin:0;background:var(--c)}.v{writing-mode:vertical-rl;transform:rotate(180deg);font-weight:700;color:#fff;line-height:16px}
.mid{flex:1;display:flex;align-items:center}.t{height:26px;display:flex;align-items:center}.b{gap:10px;align-items:center;padding-bottom:5px}.mid{padding-top:8px}`}
  html(){return `<hr><span class="t">${ic(this.a('icon'))}</span><span class="mid"><span class="v">${this.a('name')}</span></span><span class="c b">${ic('knobdot')}${ic('route')}</span><hr>`}
}
class AddSlot extends Base{
  css(){return `:host{width:21px;flex:none;position:relative;display:flex;align-items:center;justify-content:center}i{position:absolute;top:8px;left:6px;width:9px;height:9px;background:#191b0c}button{font-size:0}svg{display:block}`}
  html(){return `<i></i><button aria-label="Add device"><svg width="11" height="11"><path d="M5.500 0v11M0 5.500h11" stroke="#a0a0a0" stroke-width="2"/></svg></button>`}
}
class DeviceCard extends Base{
  css(){return `:host{display:flex;height:222px;background:#4e4e4e;border-radius:7px;padding:0 3px 0 0;flex:none;overflow:hidden}
.rail{width:27px;background:#3d3d3d;align-items:center;padding:6px 0 7px;position:relative;color:#aaa;margin-right:3px}
.p{color:${this.hasAttribute('off')?'#c8c8c8':'#e8783a'};margin-bottom:8px;height:14px;display:flex}
.v{writing-mode:vertical-rl;transform:rotate(180deg);font-weight:700;color:#fff;line-height:16px;position:absolute;left:5px;top:${this.a('top','60')}px}
.b{gap:10px;align-items:center;margin-top:auto}
slot{display:flex;flex:1;min-width:0}.w{flex:1;min-width:0;display:flex;padding:3px 0 4px}`}
  html(){return `<div class="c rail"><span class="p">${ic('power')}</span>${ic('folder')}<span class="v">${this.a('name')}</span><span class="c b">${this.a('extra').split(' ').filter(Boolean).map(ic).join('')}${ic('knobdot')}${ic('route')}</span></div><div class="w"><slot></slot></div>`}
}
class ArpCard extends Base{
  css(){return `:host{display:flex;width:127px;height:222px;background:linear-gradient(90deg,#111,#1b1b1b 14px);border:3px solid #4a4a4a;border-left:0;border-radius:0 7px 7px 0;flex-direction:column;padding-right:7px;overflow:hidden}
.h{height:26px;padding-left:9px;color:#f0763a;font-weight:600}.h span{margin-left:auto;padding-right:5px}.h bw-icon+bw-icon{margin-left:21px}
.ln{height:80px;display:grid;grid-template-rows:20px 21px 19px 20px;border-top:1px solid #262626}.ln div{border-bottom:1px solid #242424}.ln div:nth-child(2){border-bottom:2px solid transparent;background:repeating-linear-gradient(90deg,#7a4a2a 0 18px,transparent 18px 20px) 1px bottom/100% 2px no-repeat;background-origin:border-box;background-clip:border-box}
.g{display:grid;grid-template-columns:repeat(6,18px);gap:0 2px;justify-content:end}
.g i{height:34px;border-top:1px solid #3f5563;background:#26323b}.x{height:20px;align-items:center;justify-items:center;color:#666}.g.s i{height:5px;border:0;background:#2e2e2e}
.g.o{margin-top:7px}.g.o i{background:#3b382a;border-color:#6a6640}`}
  html(){const n='<i></i>'.repeat(6);return `<div class="r h">${ic('chord')}${ic('layers')}<span>8 steps</span></div><div class="ln"><div></div><div></div><div></div><div></div></div><div class="g x">${ic('closeThin').repeat(6)}</div><div class="g s">${n}</div><div class="g" style="margin-top:6px">${n}</div><div class="g o">${n}</div>`}
}
class KeyFilter extends Base{
  css(){return `:host{flex:1;background:#3d3d3d;display:flex;flex-direction:column}
.t{height:32px;padding:0 34px 0 10px;color:#e8623a;justify-content:space-between;font-size:12px}.n{width:70px;justify-content:space-between}
.d{text-align:center;padding-top:18px;height:93px}
.b{display:flex;justify-content:space-between;padding:0 16px 0 17px;align-items:flex-start}
label{display:block;font-style:italic;color:#c8c8c8;margin-top:23px;text-align:center}
input{display:block;width:56px;height:20px;background:#cfcbd0;border:1px solid #aaa;color:#444;text-align:right;padding-right:3px;margin-top:3px;border-radius:2px;font-style:normal;font-size:12px}
.m{border:1px solid #2a2a2a;border-radius:2px;width:65px;background:#2a2a2a;gap:1px}
.m button{height:19px;background:linear-gradient(#606060,#4c4c4c);color:#fff;font-weight:700}.m .on{background:#f08620;color:#6b3609;font-weight:500}`}
  html(){return `<div class="r t"><span class="r n">${ic('tril')}<span>E</span>${ic('trir')}</span><span>Min</span></div><div class="d">${ic('scale')}</div><div class="b"><label>Mode Shift<input value="0 steps"></label><div class="c m"><button>Filter</button><button>Keep</button><button class="on">Constrain</button><button>Solo</button></div></div>`}
}
class ParamRow extends Base{
  css(){return `:host{display:flex;align-items:center;gap:4px;height:30px;flex:none;padding-left:4px;border-bottom:1px solid #454545;line-height:14px;font-size:12px;padding-bottom:1px}
:host(:nth-child(even)){height:31px}
:host([head]){height:33px;border-bottom:2px solid #484848;padding-bottom:3px}div{white-space:nowrap}`}
  html(){const d=this.hasAttribute('dim');return `<bw-knob size="30" body="9" stroke="${d?2:2.500}" value="${this.a('v','0')}" ${d?`color="#999" track="#555" pointer="#ccc"`:''}></bw-knob><div><slot></slot><br>${this.a('val')}&nbsp;</div>`}
}
class ParamList extends Base{
  css(){const d=this.hasAttribute('dim');return `:host{flex:1;display:flex;flex-direction:column;color:${d?'#bdbdbd':'#f4f4f4'};font-weight:${d?400:600};min-width:0;overflow:hidden}
.h{height:21px;flex:none;padding-right:5px;gap:0;justify-content:space-between;padding-left:5px;color:${d?'#777':'#e8862e'}}
.s{background:#1e1e1e;height:21px;padding:0 4px;width:${d?124:78}px;color:#bbb}.s input{flex:1;width:20px}
.l{flex:1;overflow:hidden;background:${d?'#404040':'#353535'};position:relative;margin-top:3px}
.bar{position:absolute;right:0;top:34px;width:4px;height:${d?46:8}px;background:#5a5a5a}`}
  html(){return `<div class="r h">${ic('modk')}${this.hasAttribute('dim')?'':ic('tree')+ic('twoarr')}<div class="r s">${ic('search')}<input aria-label="Search parameters">${ic('closeThin')}</div>${ic('arr')}</div><div class="c l"><slot></slot><span class="bar"></span></div>`}
}
class DelayBody extends Base{
  css(){return `:host{flex:1;display:flex;gap:4px;font-size:12px}
.dk{background:#1b1b1b;border-radius:2px}.g{background:#333;border-radius:2px}
.modes{width:28px;align-items:center;padding-top:8px;gap:16px;position:relative}
.v{writing-mode:vertical-rl;transform:rotate(180deg);margin-top:auto;margin-bottom:8px;color:#d0d0d0;font-size:11px;line-height:16px}
.time{height:142px;padding:8px 12px 0}.q{display:grid;grid-template-columns:repeat(4,25px);justify-content:center;justify-items:center;line-height:20px;color:#d6d6d6;font-size:13px}
.q .on{color:#d8173f;border-bottom:2px solid #d8173f;width:26px;text-align:center;line-height:18px}
.sl{height:17px;background:#303030;margin:9px 4px 0;display:flex;justify-content:center}.sl i{width:3px;background:#b51a3e}
.nn{display:grid;grid-template-columns:1fr 1fr 1fr;padding:0 0 0 6px;color:#666;margin-top:1px}
.nn span{display:flex;flex-direction:column;align-items:center;gap:2px}.nn span:nth-child(2){padding-right:5px}.nn span:last-child{align-items:flex-end}.nn span:first-child{align-items:flex-start;padding-left:8px}
.nn b{border:4px solid transparent;border-bottom:6px solid currentColor;border-top:0}
.ms{text-align:center;margin-top:4px;color:#7c1530}.ms u{color:#999;text-decoration:none}
.eq{height:69px;position:relative;text-align:center;color:#aaa;padding-top:1px}
.eq .kk{display:flex;justify-content:space-around;padding:0 6px}.eq .kk span{display:flex;flex-direction:column;align-items:center;gap:0}
.k3{width:73px;align-items:center;color:#d0d0d0}.k3 .r{width:73px;justify-content:space-between;padding:0 6px}
.k4{width:70px;align-items:center;color:#d0d0d0}.up{margin-top:-3px}
.fx{height:33px;width:70px;display:flex;justify-content:center;align-items:center;color:#fff;font-weight:700;font-size:11px;position:relative;padding-top:2px}
.fx::before{content:"";position:absolute;left:2px;right:2px;top:2px;height:5px;border:2px solid #c8e040;border-bottom:0}`}
  html(){const K=(v,x='')=>`<bw-knob size="46" value="${v}" ${x}></bw-knob>`;
    return `<div class="c dk modes">${['ring1','ring2','ring3','ring4'].map(ic).join('')}<span class="v">Stereo</span></div>
<div class="c" style="width:126px;gap:4px"><div class="dk time"><div class="q" style="height:21px">${ic('clock')}<span style="color:#d8173f">${ic('n16')}</span><span style="color:#aaa">${ic('n8')}</span><span style="color:#aaa">${ic('n4')}</span></div>
<div class="q"><span>1</span><span>2</span><span class="on">3</span><span>4</span><span>5</span><span>6</span><span>7</span><span>8</span></div><div class="sl"><i></i></div>
<div class="nn"><span><b></b>${ic('n16')}</span><span style="color:#d8173f"><b></b>${ic('n16')}</span><span><b></b>${ic('n8')}</span></div><div class="ms"><u>±</u> &nbsp;0 ms</div></div>
<div class="g eq">EQ<div class="kk"><span><bw-knob size="38" body="12" value="0.5" from="0.5" to="1"></bw-knob>${ic('hp')}</span><span><bw-knob size="38" body="12" value="0.72"></bw-knob>${ic('lp')}</span></div></div></div>
<div class="c g k3"><div style="height:11px"></div>${K(0)}<div class="r" style="margin-bottom:13px">${ic('tril')}<span>Soft</span>${ic('trir')}</div><span class="r" style="justify-content:flex-end"><span style="margin-right:7px;display:flex">${K(.44,'color="#b8d838"')}</span>${ic('tril')}</span><div style="height:17px">${ic('fb')}</div><div style="height:7px"></div>${K(0)}<span class="up">Ducking</span></div>
<div class="c" style="gap:4px"><div class="g fx">FB FX</div><div class="c g k4 f" style="position:relative"><div style="height:15px"></div>${ic('snow')}<div style="height:14px"></div>${K(1)}<span class="up" style="margin-bottom:11px">Width</span>${K(.47)}<span class="up">Mix</span><span style="position:absolute;left:-10px;top:140px">${ic('arrLong')}</span></div></div>`}
}
class DevicePanel extends Base{
  css(){return `:host{display:flex;flex-direction:column;border:1px solid #4c4c4c;border-top-width:2px;background:#0f0f0f;border-radius:3px;overflow:hidden}
.ch{display:flex;height:242px}.st{gap:2px;display:flex}.cards{display:flex;padding-top:12px;align-items:flex-start}add-slot{height:220px}
.sb{height:4px;margin-left:305px;margin-right:24px;background:#3e3e3e}`}
  html(){const p=(n,v,x,d='')=>`<param-row ${d} v="${x}" val="${v}">${n}</param-row>`;
    return `<div class="ch"><div class="st"><track-strip name="PROJECT" icon="crown" style="--c:#777"></track-strip><track-strip name="ARPSEQ" icon="keysBig" style="--c:#8a85dc"></track-strip></div>
<div class="cards"><arp-card></arp-card><add-slot></add-slot>
<device-card name="KEY FILTER+" top="80" extra="flatsharp" style="width:203px"><key-filter></key-filter></device-card><add-slot></add-slot>
<device-card name="SURGE XT" top="86" extra="win" style="width:205px"><param-list>${p('M4: SPACE','0.096401',.1,'head')+p('M1: TONE','0.712273',.71)+p('M2: DECAY','0.154546',.15)+p('M3: SHAPE','0.250000',.25)+p('M4: SPACE','0.096401',.1)+p('M5: DELAY','0.017310',.02)+p('M6:','',.0)}</param-list></device-card><add-slot></add-slot>
<device-card name="DELAY+" top="90" style="width:341px"><delay-body></delay-body></device-card><add-slot></add-slot>
<device-card off name="RAUM" top="94" extra="win" style="width:204px"><param-list dim>${p('Mix','23.5 %',.235,'dim head')+p('Sync','Off',0,'dim')+p('Predelay','13 ms',.2,'dim')+p('-','-',0,'dim')+p('-','-',0,'dim')+p('Feedback','0.0 %',0,'dim')+p('Low Cut','',0,'dim')}</param-list></device-card><add-slot></add-slot></div></div><div class="sb"></div>`}
}

/* ---------- browser ---------- */
class BrowserPanel extends Base{
  css(){return `:host{display:flex;flex-direction:column;border:1px solid #4c4c4c;border-radius:3px;background:#333}
.tb{height:40px;border-bottom:1px solid #555;justify-content:space-between;padding:0 10px 0 9px}.tb bw-icon:first-child{margin-right:3px}
.ev{height:30px;display:grid;grid-template-columns:1fr auto 1fr;align-items:center;padding:0 11px 0 8px;color:#d0d0d0;font-size:12px}.ev bw-icon{justify-self:end;color:#b0a040}
.se{height:22px;margin:1px 6px 0;background:#0f0f0f;padding:0 9px 0 6px;color:#fff}.se input{flex:1;padding-left:3px;font-weight:700;font-size:11px}
.fl{display:grid;height:25px;align-items:center;padding-left:13px;color:#bcbcbc}.fl span{display:flex;gap:10px;align-items:center}
.ls{flex:1;background:#0f0f0f;margin:5px 0 0;color:#f4f4f4;font-weight:700}.ls a{display:flex;align-items:center;height:23px;padding-left:13px;gap:7px}.ls a:first-child{margin-top:2px}.ls a.on{background:#2b3742}
.dt{height:237px;padding:4px 9px 0 10px;border-top:1px solid #444;color:#d2d2d2}
.ti{gap:8px;height:21px;padding-right:4px;margin-left:-2px}
.g{display:grid;grid-template-columns:90px 112px 86px;text-align:center;line-height:15px;margin-top:4px}.k{color:#929292}
.tg{gap:8px;margin-top:4px}.loc{line-height:17px}.col{gap:8px;margin-top:3px}`}
  html(){const star=n=>`<span><svg width="9" height="10"><path d="M4.500 0v10M.5 2.500l8 5M.5 7.500l8-5" stroke="#b4b4b4" stroke-width="1.400"/></svg>${n}</span>`;
    return `<div class="r tb">${['squares','everything','gRed','gGreen','gBlue','gYellow','gOrange','bkPanel','bkList','bkWave','bkUser','bkMon'].map(ic).join('')}</div>
<div class="ev"><span></span><span>Everything</span>${ic('star')}</div>
<div class="r se">${ic('search')}<input aria-label="Search" value="EL ARP EMB">${ic('close')}</div>
<div class="fl" style="grid-template-columns:100px 100px 1fr">${star('Location')+star('File Kind')+star('Creator')}</div><div class="fl" style="grid-template-columns:150px 1fr">${star('Device')+star('Tags')}</div>
<div class="ls"><a href="#">${ic('preset')}EL ARP Ember Glints</a><a class="on" href="#">${ic('preset')}EL ARP Ember Stairs</a><a href="#">${ic('preset')}EL ARP Ember Stairs</a></div>
<div class="dt"><div class="r ti">${ic('preset')}<span class="f" style="color:#e4e4e4;font-weight:600">EL ARP Ember Stairs</span>${ic('chevd')}</div>
<div class="g"><span class="k">CATEGORY</span><span class="k">CREATOR</span><span class="k">DEVICE</span><span>Note</span><span>EtherLoops</span><span>Arpeggiator</span></div>
<div class="r tg"><span class="k" style="margin-right:8px">TAGS</span><span>ambient</span><span>arpeggio</span><span>key-safe</span></div>
<div class="k" style="margin:14px 0 3px">LOCATION</div><div class="loc"><div class="r" style="gap:7px">${ic('gfolder')}<span>Etherloops/Bitwig Packs/</span></div>EtherLoops ArpSeq BW Free Starter/<br>EtherLoops ArpSeq BW - Free Star... /<br>EtherLoops ArpSeq BW Free</div>
<div class="k" style="margin-top:16px">COLLECTIONS</div><div class="r col"><span style="color:#a08c3c;display:flex;margin-right:-2px">${ic('star')}</span>${['#d8cf4a','#d8703a','#4f86c8','#d8cf4a','#9050c8','#9a50d0','#4fa828','#a81c40'].map(c=>`<span style="color:${c};display:flex">${ic('circ')}</span>`).join('')}</div></div>`}
}

/* ---------- footer ---------- */
class StatusBar extends Base{
  css(){return `:host{height:34px;background:#333;display:flex;align-items:center;padding:0 14px 0 17px;color:#a0a0a0}
hr{width:1px;height:16px;border:0;background:#777;margin:0}b{color:#dcdcdc}.v{color:#eee;gap:10px;margin:0 14px;font-weight:600}.on{color:#f08040}
.i{gap:13px;margin-left:11px}.h{gap:8px;margin-left:25px}.h+.h{margin-left:20px}.q{gap:15px;margin-left:auto}`}
  html(){return `${ic('info')}<hr style="margin-left:16px"><div class="r v"><button class="on">ARRANGE</button><button>MIX</button><button>EDIT</button></div><hr><div class="r i">${['nodes','panelor','faders'].map(ic).join('')}</div>
<span class="r h"><b>CLICK</b>Insert content</span><span class="r h"><b>SHIFT+CLICK</b>Insert favorites</span><span class="r h"><b>RIGHT-CLICK</b>Insert favorites</span>
<div class="r q">${['mag','page','speaker','hand'].map(ic).join('')}<hr>${ic('keysBig')}</div>`}
}

class DawApp extends Base{
  css(){return `:host{display:flex;flex-direction:column;height:100vh;padding-top:44px;background:#000;position:relative}
.work{flex:1;min-height:0;display:grid;grid-template-columns:162px minmax(0,1fr) 313px;gap:4px;padding:2px 1px 2px 0;background:#272727}
.mid{display:grid;grid-template-rows:minmax(0,1fr) 249px;gap:2px;min-width:0}
.edge{height:4px;background:#dde6e4;margin-bottom:1px;flex:none}
.cur{position:absolute;left:263px;top:290px;display:flex}`}
  html(){return `<app-header></app-header><div class="work"><inspector-panel></inspector-panel><div class="mid"><arranger-panel></arranger-panel><device-panel></device-panel></div><browser-panel></browser-panel></div><status-bar></status-bar><div class="edge"></div><span class="cur">${ic('cursor')}</span>`}
}
def('bw-icon',BwIcon);def('bw-knob',BwKnob);def('project-tab',ProjectTab);def('tool-group',ToolGroup);def('tool-button',ToolButton);def('transport-display',TransportDisplay);def('app-header',AppHeader);def('inspector-panel',InspectorPanel);def('clip-block',ClipBlock);def('track-row',TrackRow);def('time-ruler',TimeRuler);def('arranger-panel',ArrangerPanel);def('track-strip',TrackStrip);def('add-slot',AddSlot);def('device-card',DeviceCard);def('arp-card',ArpCard);def('key-filter',KeyFilter);def('param-row',ParamRow);def('param-list',ParamList);def('delay-body',DelayBody);def('device-panel',DevicePanel);def('browser-panel',BrowserPanel);def('status-bar',StatusBar);def('daw-app',DawApp);
</script>
</body>
</html>
